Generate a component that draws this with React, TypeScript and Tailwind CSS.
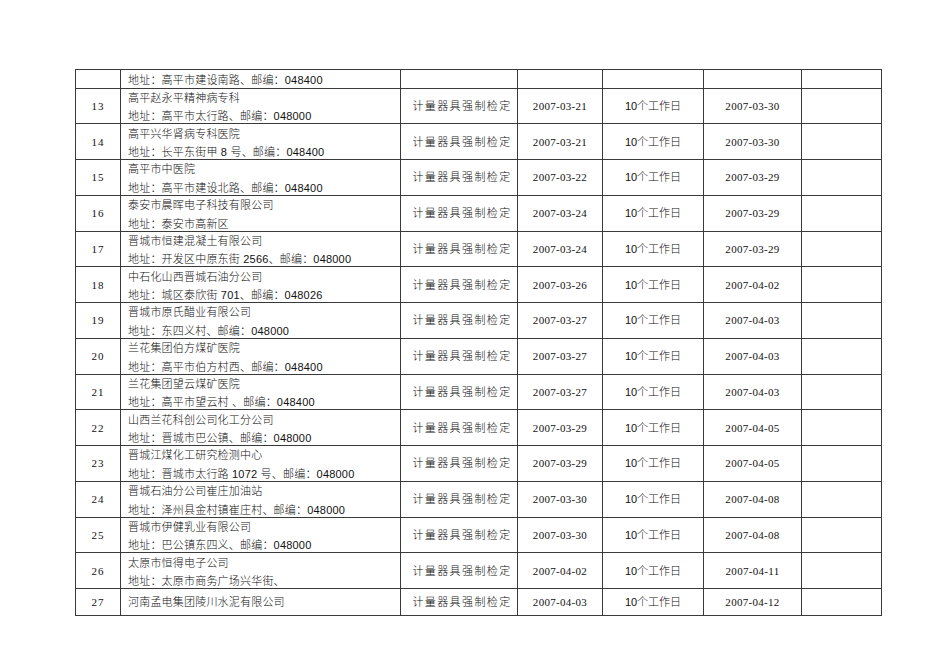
import React from "react";

type Row = {
  no: string;
  name: string;
  addr?: string;
  start: string;
  end: string;
};

const ROWS: Row[] = [
  { no: "13", name: "高平赵永平精神病专科", addr: "地址：高平市太行路、邮编：048000", start: "2007-03-21", end: "2007-03-30" },
  { no: "14", name: "高平兴华肾病专科医院", addr: "地址：长平东街甲 8 号、邮编：048400", start: "2007-03-21", end: "2007-03-30" },
  { no: "15", name: "高平市中医院", addr: "地址：高平市建设北路、邮编：048400", start: "2007-03-22", end: "2007-03-29" },
  { no: "16", name: "泰安市晨晖电子科技有限公司", addr: "地址：泰安市高新区", start: "2007-03-24", end: "2007-03-29" },
  { no: "17", name: "晋城市恒建混凝土有限公司", addr: "地址：开发区中原东街 2566、邮编：048000", start: "2007-03-24", end: "2007-03-29" },
  { no: "18", name: "中石化山西晋城石油分公司", addr: "地址：城区泰欣街 701、邮编：048026", start: "2007-03-26", end: "2007-04-02" },
  { no: "19", name: "晋城市原氏醋业有限公司", addr: "地址：东四义村、邮编：048000", start: "2007-03-27", end: "2007-04-03" },
  { no: "20", name: "兰花集团伯方煤矿医院", addr: "地址：高平市伯方村西、邮编：048400", start: "2007-03-27", end: "2007-04-03" },
  { no: "21", name: "兰花集团望云煤矿医院", addr: "地址：高平市望云村 、邮编：048400", start: "2007-03-27", end: "2007-04-03" },
  { no: "22", name: "山西兰花科创公司化工分公司", addr: "地址：晋城市巴公镇、邮编：048000", start: "2007-03-29", end: "2007-04-05" },
  { no: "23", name: "晋城江煤化工研究检测中心", addr: "地址：晋城市太行路 1072 号、邮编：048000", start: "2007-03-29", end: "2007-04-05" },
  { no: "24", name: "晋城石油分公司崔庄加油站", addr: "地址：泽州县金村镇崔庄村、邮编：048000", start: "2007-03-30", end: "2007-04-08" },
  { no: "25", name: "晋城市伊健乳业有限公司", addr: "地址：巴公镇东四义、邮编：048000", start: "2007-03-30", end: "2007-04-08" },
  { no: "26", name: "太原市恒得电子公司", addr: "地址：太原市商务广场兴华街、", start: "2007-04-02", end: "2007-04-11" },
  { no: "27", name: "河南孟电集团陵川水泥有限公司", start: "2007-04-03", end: "2007-04-12" },
];

const cjk = "[font-family:'Liberation_Sans','Noto_Sans_CJK_SC',sans-serif] font-light";
const serif = "[font-family:'Liberation_Serif','Noto_Sans_CJK_SC',serif]";
const td = "border border-[#3a3a3a] p-0 align-middle";

export default function App() {
  return (
    <div className="w-[950px] h-[672px] bg-white pt-[69px] pl-[75px]">
      <table className="table-fixed border-collapse text-[#111] text-[11px] w-[806px]">
        <colgroup>
          <col className="w-[45px]" />
          <col className="w-[280px]" />
          <col className="w-[117px]" />
          <col className="w-[85px]" />
          <col className="w-[101px]" />
          <col className="w-[98px]" />
          <col className="w-[80px]" />
        </colgroup>
        <tbody>
          {/* 上一页延续的行 */}
          <tr className="h-[18.7px]">
            <td className={td}></td>
            <td className={`${td} pl-[7px] pt-[3px] ${cjk} leading-[14px] tracking-[0.2px]`}>
              地址：高平市建设南路、邮编：048400
            </td>
            <td className={td}></td>
            <td className={td}></td>
            <td className={td}></td>
            <td className={td}></td>
            <td className={td}></td>
          </tr>
          {ROWS.map((r) => (
            <tr key={r.no} className={r.addr ? "h-[35.76px]" : "h-[26.7px]"}>
              <td className={`${td} text-center ${serif} tracking-[1px]`}>{r.no}</td>
              <td className={`${td} pl-[7px] ${cjk} tracking-[0.2px]`}>
                <div className={r.addr ? "leading-[19px]" : "leading-[17px]"}>{r.name}</div>
                {r.addr && <div className="leading-[13px] mt-[2.5px]">{r.addr}</div>}
              </td>
              <td className={`${td} text-center pl-[6px] ${cjk} tracking-[1.4px]`}>计量器具强制检定</td>
              <td className={`${td} text-center ${serif} tracking-[0.3px]`}>{r.start}</td>
              <td className={`${td} text-center ${cjk}`}>10个工作日</td>
              <td className={`${td} text-center ${serif} tracking-[0.3px]`}>{r.end}</td>
              <td className={td}></td>
            </tr>
          ))}
        </tbody>
      </table>
    </div>
  );
}
